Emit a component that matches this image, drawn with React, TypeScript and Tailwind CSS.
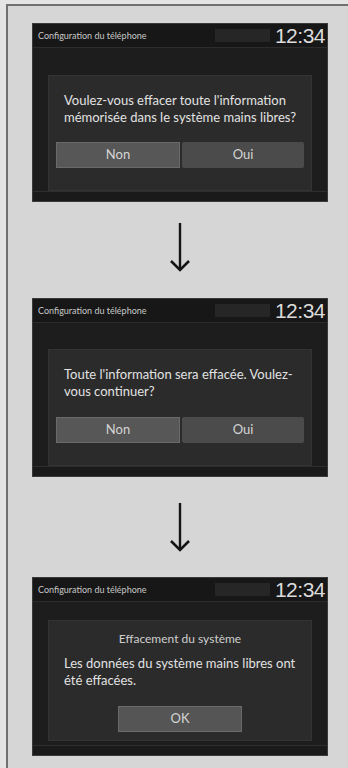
import React from "react";

const font = { fontFamily: "Lato, 'Noto Sans', 'Liberation Sans', sans-serif" };

function Header() {
  return (
    <div className="h-[24px] flex items-center bg-[#171717] border-b border-[#2c2c2c] pl-[5px] pr-[2px]">
      <span className="text-[9px] text-[#c8c8c8] whitespace-nowrap leading-none">Configuration du téléphone</span>
      <div className="ml-auto w-[55px] h-[13px] bg-[#262626]" />
      <span className="ml-[5px] text-[21px] text-[#dcdcdc] leading-none tracking-[-0.5px]" style={{ fontFamily: "'Liberation Sans', Arial, sans-serif" }}>12:34</span>
    </div>
  );
}

function Screen({ children, gapTop }: { children: React.ReactNode; gapTop: string }) {
  return (
    <div className="w-[296px] h-[179px] bg-[#1d1d1d] flex flex-col border border-[#3a3a3a]" style={font}>
      <Header />
      <div className={`flex-1 flex flex-col px-[15px] ${gapTop}`}>
        {children}
      </div>
      <div className="h-[10px] bg-[#1a1a1a] border-t border-[#2e2e2e]" />
    </div>
  );
}

function Arrow() {
  return (
    <div className="flex justify-center w-[296px]">
      <svg width="24" height="50" viewBox="0 0 24 50">
        <line x1="12" y1="0" x2="12" y2="47" stroke="#151515" strokeWidth="2.4" />
        <polyline points="3,38 12,47 21,38" fill="none" stroke="#151515" strokeWidth="2.6" />
      </svg>
    </div>
  );
}

function Buttons() {
  return (
    <div className="flex gap-[2px] px-[7px] mt-auto mb-[22px]">
      <div className="flex-1 h-[26px] bg-[#575757] border border-[#6a6a6a] flex items-center justify-center text-[13px] text-[#d4d4d4]">Non</div>
      <div className="flex-1 h-[26px] bg-[#4b4b4b] rounded-[2px] flex items-center justify-center text-[13px] text-[#d4d4d4]">Oui</div>
    </div>
  );
}

export default function App() {
  return (
    <div className="w-[348px] h-[768px] bg-[#e4e4e4] pt-[4px] pl-[6px] overflow-hidden">
      <div className="h-[764px] border-l-2 border-t-2 border-[#707070] bg-[#d6d6d6] pl-[24px] pt-[17px] flex flex-col">
        <Screen gapTop="pt-[27px]">
          <div className="flex-1 flex flex-col bg-[#2b2b2b] border border-[#333]">
            <div className="pt-[16px] pl-[15px] text-[13px] leading-[17px] text-[#e2e2e2] whitespace-nowrap">
              Voulez-vous effacer toute l'information<br />mémorisée dans le système mains libres?
            </div>
            <Buttons />
          </div>
        </Screen>
        <div className="h-[21px]" />
        <Arrow />
        <div className="h-[25px]" />
        <Screen gapTop="pt-[26px]">
          <div className="flex-1 flex flex-col bg-[#2b2b2b] border border-[#333]">
            <div className="pt-[16px] pl-[15px] text-[13px] leading-[17px] text-[#e2e2e2] whitespace-nowrap">
              Toute l'information sera effacée. Voulez-<br />vous continuer?
            </div>
            <Buttons />
          </div>
        </Screen>
        <div className="h-[26px]" />
        <Arrow />
        <div className="h-[24px]" />
        <Screen gapTop="pt-[18px]">
          <div className="flex-1 flex flex-col bg-[#2b2b2b] border border-[#333] mb-[4px]">
            <div className="pt-[10px] text-center text-[12px] leading-[16px] text-[#cfcfcf]">Effacement du système</div>
            <div className="pt-[8px] pl-[15px] text-[13px] leading-[17px] text-[#e2e2e2] whitespace-nowrap">
              Les données du système mains libres ont<br />été effacées.
            </div>
            <div className="flex justify-center mt-auto mb-[8px]">
              <div className="w-[124px] h-[26px] bg-[#555] border border-[#6a6a6a] flex items-center justify-center text-[13px] text-[#d4d4d4]">OK</div>
            </div>
          </div>
        </Screen>
      </div>
    </div>
  );
}
